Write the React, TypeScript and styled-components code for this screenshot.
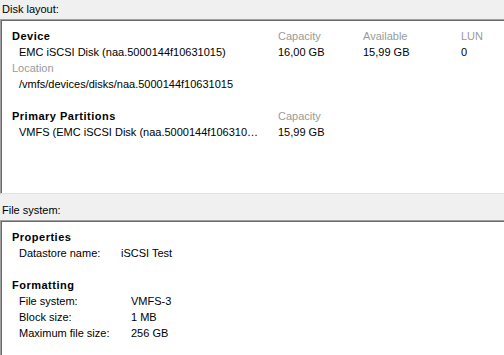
import styled, { createGlobalStyle } from "styled-components";

const GlobalStyle = createGlobalStyle`
  html, body {
    margin: 0;
    padding: 0;
    background: #f0f0f0;
    overflow: hidden;
  }
  body {
    font-family: "Liberation Sans", Arial, sans-serif;
    font-size: 11px;
    color: #000;
  }
`;

const Page = styled.div`
  width: 504px;
  height: 355px;
  overflow: hidden;
  background: #f0f0f0;
`;

const SectionTitle = styled.div<{ $gap?: number }>`
  height: 19px;
  line-height: 19px;
  padding-left: 2px;
  margin-top: ${(p) => p.$gap ?? 0}px;
  color: #000;
`;

const Panel = styled.div<{ $height: number }>`
  box-sizing: border-box;
  height: ${(p) => p.$height}px;
  background: #fff;
  border-top: 1px solid #a0a0a0;
  border-left: 1px solid #a0a0a0;
  border-bottom: 1px solid #e3e3e3;
  box-shadow: inset 1px 1px 0 #696969;
  padding: 8px 0 0 11px;
`;

const DiskGrid = styled.div`
  display: grid;
  grid-template-columns: 266px 85px 98px 1fr;
  grid-auto-rows: 16px;
  line-height: 16px;
`;

const Heading = styled.div`
  font-weight: bold;
  letter-spacing: 0.5px;
`;

const Dim = styled.div`
  color: #9a9a9a;
`;

const Value = styled.div<{ $indent?: boolean; $trim?: number }>`
  padding-left: ${(p) => (p.$indent ? 7 : 0)}px;
  padding-right: ${(p) => p.$trim ?? 0}px;
  white-space: nowrap;
  overflow: hidden;
  text-overflow: ellipsis;
`;

const Spacer = styled.div`
  grid-column: 1 / -1;
`;

const Wide = styled(Value)`
  grid-column: 1 / -1;
`;

const Group = styled.div`
  line-height: 16px;
  & + & {
    margin-top: 16px;
  }
`;

const PropRow = styled.div<{ $label: number }>`
  display: grid;
  grid-template-columns: ${(p) => p.$label}px 1fr;
  padding-left: 7px;
  height: 16px;
`;

const props = [{ k: "Datastore name:", v: "iSCSI Test" }];

const formatting = [
  { k: "File system:", v: "VMFS-3" },
  { k: "Block size:", v: "1 MB" },
  { k: "Maximum file size:", v: "256 GB" },
];

export default function App() {
  return (
    <Page>
      <GlobalStyle />
      <SectionTitle>Disk layout:</SectionTitle>
      <Panel $height={175}>
        <DiskGrid>
          <Heading>Device</Heading>
          <Dim>Capacity</Dim>
          <Dim>Available</Dim>
          <Dim>LUN</Dim>
          <Value $indent>EMC iSCSI Disk (naa.5000144f10631015)</Value>
          <Value>16,00 GB</Value>
          <Value>15,99 GB</Value>
          <Value>0</Value>
          <Dim>Location</Dim>
          <div />
          <div />
          <div />
          <Wide $indent>/vmfs/devices/disks/naa.5000144f10631015</Wide>
          <Spacer />
          <Heading>Primary Partitions</Heading>
          <Dim>Capacity</Dim>
          <div />
          <div />
          <Value $indent $trim={17}>
            VMFS (EMC iSCSI Disk (naa.5000144f10631015):1)
          </Value>
          <Value>15,99 GB</Value>
        </DiskGrid>
      </Panel>
      <SectionTitle $gap={7}>File system:</SectionTitle>
      <Panel $height={200}>
        <Group>
          <Heading>Properties</Heading>
          {props.map((r) => (
            <PropRow key={r.k} $label={102}>
              <span>{r.k}</span>
              <span>{r.v}</span>
            </PropRow>
          ))}
        </Group>
        <Group>
          <Heading>Formatting</Heading>
          {formatting.map((r) => (
            <PropRow key={r.k} $label={112}>
              <span>{r.k}</span>
              <span>{r.v}</span>
            </PropRow>
          ))}
        </Group>
      </Panel>
    </Page>
  );
}
